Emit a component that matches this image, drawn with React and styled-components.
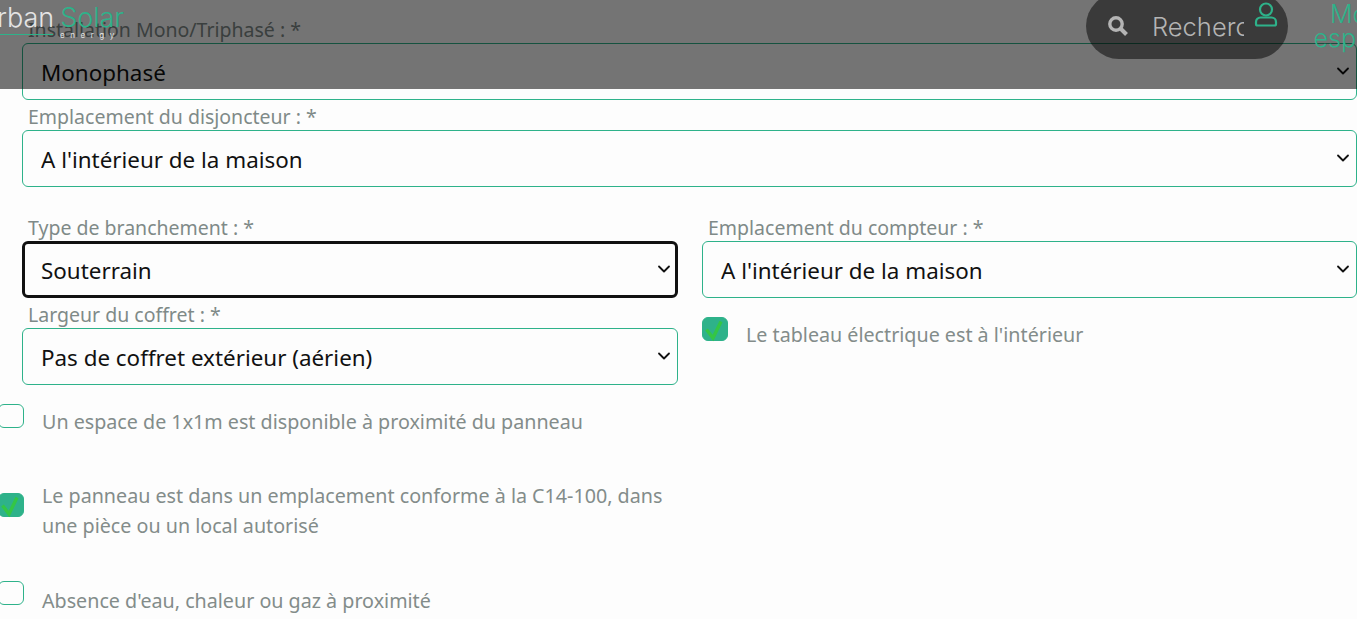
import React from 'react';
import styled, { createGlobalStyle } from 'styled-components';
import { ChevronDown } from 'lucide-react';

const GREEN = '#2eb28a';

const Global = createGlobalStyle`
  html, body {
    margin: 0;
    height: 619px;
    overflow: hidden;
    background: #fdfdfd;
  }
`;

const Page = styled.div`
  position: relative;
  width: 1357px;
  height: 619px;
  overflow: hidden;
  font-family: "Noto Sans", "Open Sans", sans-serif;
`;

const Header = styled.header`
  position: absolute;
  top: 0;
  left: 0;
  right: 0;
  height: 89px;
  background: rgba(0, 0, 0, 0.54);
  overflow: hidden;
  font-family: Inter, "Noto Sans", sans-serif;
`;

const Logo = styled.div`
  position: absolute;
  left: -19px;
  top: 1px;
  font-size: 27px;
  font-weight: 300;
  line-height: 34px;
  color: #e4e4e4;
  white-space: nowrap;
  span {
    color: ${GREEN};
    margin-left: 6px;
  }
`;

const LogoLine = styled.div`
  position: absolute;
  left: 0;
  top: 34px;
  width: 53px;
  height: 1px;
  background: ${GREEN};
`;

const LogoSub = styled.div`
  position: absolute;
  left: 60px;
  top: 29px;
  font-size: 8px;
  line-height: 12px;
  letter-spacing: 5.6px;
  color: #e8e8e8;
`;

const SearchPill = styled.div`
  position: absolute;
  left: 1086px;
  top: -7px;
  width: 202px;
  height: 66px;
  border-radius: 33px;
  background: rgba(0, 0, 0, 0.5);
  display: flex;
  align-items: center;
  padding-left: 21px;
  box-sizing: border-box;
  color: #b4b4b4;
`;

const SearchText = styled.div`
  width: 92px;
  margin-left: 23px;
  overflow: hidden;
  white-space: nowrap;
  font-size: 25.5px;
  font-weight: 300;
`;

const UserIcon = styled.svg`
  position: absolute;
  left: 1254px;
  top: 2px;
  width: 24px;
  height: 25px;
`;

const Account = styled.div`
  position: absolute;
  left: 1304px;
  top: 2px;
  width: 104px;
  text-align: center;
  font-size: 25px;
  font-weight: 300;
  line-height: 24px;
  color: ${GREEN};
`;

const Form = styled.form`
  padding: 17px 0 0 22px;
  display: flex;
  flex-direction: column;
`;

const Field = styled.div`
  margin-bottom: ${props => props.$gap ?? 4}px;
`;

const Label = styled.label`
  display: block;
  padding-left: 6px;
  font-size: 19.5px;
  line-height: 26px;
  color: #7f8a88;
`;

const SelectWrap = styled.div`
  position: relative;
`;

const Select = styled.select`
  display: block;
  width: 100%;
  height: 57px;
  box-sizing: border-box;
  appearance: none;
  background: transparent;
  font-family: inherit;
  font-size: 22.4px;
  color: #111;
  border-radius: 6px;
  border: ${props => (props.$focused ? '3px solid #111' : `1px solid ${GREEN}`)};
  padding: 2px 18px 0 ${props => (props.$focused ? '16px' : '18px')};
  outline: none;
`;

const Chevron = styled(ChevronDown)`
  position: absolute;
  right: 4px;
  top: 18px;
  width: 20px;
  height: 20px;
  color: #111;
  pointer-events: none;
`;

const Columns = styled.div`
  display: grid;
  grid-template-columns: 656px 655px;
  column-gap: 24px;
  margin-top: 28px;
`;

const Column = styled.div`
  display: flex;
  flex-direction: column;
`;

const CheckRow = styled.div`
  display: flex;
  align-items: flex-start;
  margin-top: ${props => props.$top}px;
  margin-left: ${props => props.$left}px;
`;

const Box = styled.div`
  flex: none;
  width: 26px;
  height: 24px;
  margin-top: ${props => props.$offset}px;
  box-sizing: border-box;
  border-radius: 6px;
  border: 1px solid ${GREEN};
  background: ${props => (props.$checked ? GREEN : 'transparent')};
`;

const CheckMark = styled.svg`
  display: block;
  width: 24px;
  height: 22px;
  overflow: visible;
`;

const CheckText = styled.div`
  margin-left: 18px;
  margin-top: ${props => props.$offset}px;
  font-size: 19.7px;
  line-height: 30px;
  color: #838c8a;
`;

const Check = () => (
  <CheckMark viewBox="0 0 24 22" fill="none">
    <path d="M3.5 11.5 L10 20 L18 3.5" stroke="#34c645" strokeWidth="3.4" />
  </CheckMark>
);

const SelectField = ({ label, value, focused, gap }) => (
  <Field $gap={gap}>
    <Label>{label}</Label>
    <SelectWrap>
      <Select $focused={focused} defaultValue={value}>
        <option>{value}</option>
      </Select>
      <Chevron strokeWidth={2.2} />
    </SelectWrap>
  </Field>
);

const CheckItem = ({ checked, text, top, left = -24, boxOffset = 0, textOffset = 0 }) => (
  <CheckRow $top={top} $left={left}>
    <Box $checked={checked} $offset={boxOffset}>{checked && <Check />}</Box>
    <CheckText $offset={textOffset}>{text}</CheckText>
  </CheckRow>
);

export default function App() {
  return (
    <Page>
      <Global />
      <Form>
        <SelectField label="Installation Mono/Triphasé : *" value="Monophasé" />
        <SelectField label="Emplacement du disjoncteur : *" value="A l'intérieur de la maison" gap={0} />
        <Columns>
          <Column>
            <SelectField label="Type de branchement : *" value="Souterrain" focused />
            <SelectField label="Largeur du coffret : *" value="Pas de coffret extérieur (aérien)" gap={0} />
            <CheckItem top={19} textOffset={3} text="Un espace de 1x1m est disponible à proximité du panneau" />
            <CheckItem top={44} boxOffset={12} checked text={<>Le panneau est dans un emplacement conforme à la C14-100, dans<br />une pièce ou un local autorisé</>} />
            <CheckItem top={40} textOffset={5} text="Absence d'eau, chaleur ou gaz à proximité" />
          </Column>
          <Column>
            <SelectField label="Emplacement du compteur : *" value="A l'intérieur de la maison" gap={0} />
            <CheckItem top={19} left={0} textOffset={3} checked text="Le tableau électrique est à l'intérieur" />
          </Column>
        </Columns>
      </Form>
      <Header>
        <Logo>urban<span>Solar</span></Logo>
        <LogoLine />
        <LogoSub>energy</LogoSub>
        <SearchPill>
          <svg width="22" height="22" viewBox="0 0 22 22" fill="none" stroke="#b4b4b4">
            <circle cx="9" cy="9" r="6.2" strokeWidth="3.4" />
            <path d="M13.5 13.5 L19.5 19.5" strokeWidth="4" />
          </svg>
          <SearchText>Rechercher</SearchText>
        </SearchPill>
        <UserIcon viewBox="0 0 24 25" fill="none" stroke={GREEN} strokeWidth="2.2">
          <circle cx="12" cy="7.5" r="6" />
          <path d="M2 22 v-2 a4.5 4.5 0 0 1 4.5 -4.5 h11 a4.5 4.5 0 0 1 4.5 4.5 v2 a1.5 1.5 0 0 1 -1.5 1.5 h-17 a1.5 1.5 0 0 1 -1.5 -1.5 z" />
        </UserIcon>
        <Account>Mon<br />espace</Account>
      </Header>
    </Page>
  );
}
